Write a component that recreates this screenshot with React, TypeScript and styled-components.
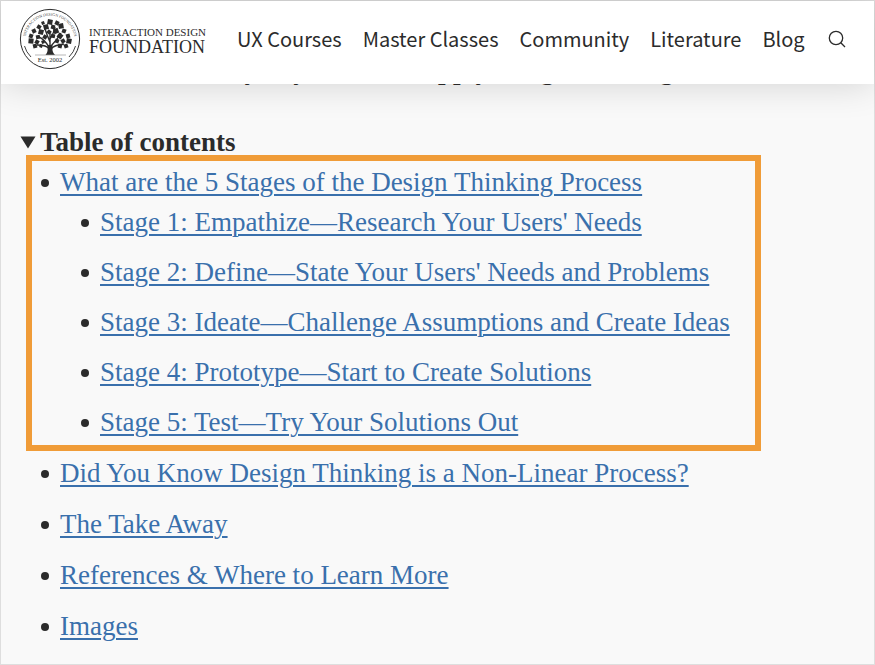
import React from "react";
import styled, { createGlobalStyle } from "styled-components";

const GlobalStyle = createGlobalStyle`
  *, *::before, *::after { box-sizing: border-box; }
  body { margin: 0; background: #f9f9f9; }
`;

const serif = `"Liberation Serif", "Times New Roman", serif`;
const ink = "#2b2b2b";

const Page = styled.div`
  min-height: 100vh;
  border: 1px solid #dedede;
  background: #f9f9f9;
  color: ${ink};
  font-family: ${serif};
  font-size: 27px;
  line-height: 40px;
`;

const Header = styled.header`
  position: sticky;
  top: 0;
  z-index: 2;
  display: flex;
  align-items: center;
  height: 83px;
  padding: 0 27px 8px 18px;
  background: #fff;
  box-shadow: 0 0 36px rgba(0, 0, 0, 0.16);
`;

const Brand = styled.a`
  display: flex;
  align-items: center;
  gap: 8px;
  color: ${ink};
  text-decoration: none;
`;

const Wordmark = styled.span`
  display: flex;
  flex-direction: column;
  padding-top: 4px;
  white-space: nowrap;
`;

const WordTop = styled.span`
  font-size: 11px;
  line-height: 12px;
`;

const WordBottom = styled.span`
  font-size: 18px;
  line-height: 18px;
`;

const Nav = styled.nav`
  display: flex;
  gap: 21px;
  margin-left: 31px;
`;

const NavLink = styled.a`
  color: ${ink};
  font-family: "Noto Sans CJK SC", "Noto Sans", sans-serif;
  font-size: 20px;
  line-height: 32px;
  text-decoration: none;
  white-space: nowrap;
`;

const SearchButton = styled.button`
  display: flex;
  margin-left: 22px;
  padding: 0;
  border: 0;
  background: none;
  color: ${ink};
  cursor: pointer;
`;

const Article = styled.main`
  padding: 0 20px 16px 19px;
`;

const Intro = styled.p`
  margin: -34px 0 32px;
  padding-left: 190px;
  font-weight: 700;
  white-space: nowrap;
`;

const Summary = styled.summary`
  display: flex;
  align-items: center;
  gap: 4px;
  font-weight: 700;
  cursor: pointer;
  list-style: none;
  &::-webkit-details-marker { display: none; }
`;

const List = styled.ul<{ $gap: number }>`
  display: flex;
  flex-direction: column;
  gap: ${(p) => p.$gap}px;
  margin: 0;
  padding-left: 40px;
  list-style: none;
`;

const Item = styled.li`
  position: relative;
  width: fit-content;
  &::before {
    content: "";
    position: absolute;
    left: -19px;
    top: 17px;
    width: 8px;
    height: 8px;
    border-radius: 50%;
    background: ${ink};
  }
`;

const Highlight = styled.span`
  position: absolute;
  inset: -7px -31px -9px -34px;
  border: 6px solid #f09c38;
  pointer-events: none;
`;

const TextLink = styled.a`
  color: #3a70ac;
  text-decoration: underline;
  text-decoration-thickness: 2px;
  text-underline-offset: 3px;
`;

const leaves: [number, number, number, number][] = [
  [30, 13, 5, 10], [23, 14, 3, -20], [37, 14, 4, 25], [19, 18, 4, 30],
  [26, 18, 5, -15], [33, 18, 4, 15], [41, 17, 5, -10], [14, 22, 4, -25],
  [21, 23, 5, 15], [29, 23, 4, 40], [36, 22, 5, -20], [44, 22, 4, 20],
  [11, 27, 4, 20], [18, 28, 4, -10], [25, 28, 4, 30], [33, 27, 4, 10],
  [40, 27, 5, 35], [48, 27, 4, -15], [11, 32, 5, 5], [17, 33, 4, 30],
  [23, 33, 3, -20], [37, 32, 4, 20], [43, 32, 4, -30], [49, 32, 5, 10],
  [15, 37, 4, -15], [21, 37, 3, 20], [40, 37, 4, 15], [46, 37, 4, -20],
];

function Seal() {
  return (
    <svg width="62" height="62" viewBox="-1 -1 62 62" aria-hidden="true">
      <circle cx="30" cy="30" r="29.6" fill="#fff" stroke={ink} strokeWidth="1" />
      <path id="seal-arc" d="M5.8 35 A24.5 24.5 0 1 1 54.2 35" fill="none" />
      <text fontFamily="Liberation Serif, serif" fontSize="4" fill="#444">
        <textPath href="#seal-arc" startOffset="50%" textAnchor="middle">
          INTERACTION DESIGN FOUNDATION
        </textPath>
      </text>
      <path d="M4.5 37 Q6 43 11 48 M55.5 37 Q54 43 49 48" fill="none" stroke={ink} strokeWidth="0.9" />
      <g fill={ink}>
        {leaves.map(([x, y, s, r]) => (
          <rect
            key={`${x}-${y}`}
            x={x - s / 2}
            y={y - s / 2}
            width={s}
            height={s}
            transform={`rotate(${r} ${x} ${y})`}
          />
        ))}
        <path d="M25.500 46 Q28.500 43 27.500 36 L32.500 36 Q31.500 43 35 46 Z" />
      </g>
      <path
        d="M30 42 V22 M29 40 Q27 36 17 36 M29 38 Q24 30 19 28 M31 40 Q34 36 44 35 M31 37 Q37 31 41 24 M30 33 Q27 26 25 20 M30 30 Q34 24 35 18"
        fill="none"
        stroke={ink}
        strokeWidth="1.4"
      />
      <path d="M15 46 H46" stroke="#999" strokeWidth="0.7" />
      <text x="30" y="53" textAnchor="middle" fontFamily="Liberation Serif, serif" fontSize="6.5" fill={ink}>
        Est. 2002
      </text>
    </svg>
  );
}

const navLinks = ["UX Courses", "Master Classes", "Community", "Literature", "Blog"];

const stages = [
  "Stage 1: Empathize—Research Your Users' Needs",
  "Stage 2: Define—State Your Users' Needs and Problems",
  "Stage 3: Ideate—Challenge Assumptions and Create Ideas",
  "Stage 4: Prototype—Start to Create Solutions",
  "Stage 5: Test—Try Your Solutions Out",
];

const sections = [
  "Did You Know Design Thinking is a Non-Linear Process?",
  "The Take Away",
  "References & Where to Learn More",
  "Images",
];

export default function App() {
  return (
    <Page>
      <GlobalStyle />
      <Header>
        <Brand href="#home">
          <Seal />
          <Wordmark>
            <WordTop>INTERACTION DESIGN</WordTop>
            <WordBottom>FOUNDATION</WordBottom>
          </Wordmark>
        </Brand>
        <Nav>
          {navLinks.map((label) => (
            <NavLink key={label} href="#nav">{label}</NavLink>
          ))}
        </Nav>
        <SearchButton aria-label="Search">
          <svg width="20" height="20" viewBox="0 0 20 20" fill="none" stroke="currentColor" strokeWidth="1.3">
            <circle cx="9" cy="9" r="6.700" />
            <path d="M13.800 13.800 L18 18" />
          </svg>
        </SearchButton>
      </Header>
      <Article>
        <Intro>why any team can apply design thinking</Intro>
        <details open>
          <Summary>
            <svg width="16" height="13" viewBox="0 0 16 13" aria-hidden="true">
              <path d="M0.500 0.500 H15.500 L8 12.500 Z" fill={ink} />
            </svg>
            Table of contents
          </Summary>
          <List $gap={11}>
            <Item>
              <TextLink href="#stages">What are the 5 Stages of the Design Thinking Process</TextLink>
              <List $gap={10}>
                {stages.map((label) => (
                  <Item key={label}>
                    <TextLink href="#stage">{label}</TextLink>
                  </Item>
                ))}
              </List>
              <Highlight />
            </Item>
            {sections.map((label) => (
              <Item key={label}>
                <TextLink href="#section">{label}</TextLink>
              </Item>
            ))}
          </List>
        </details>
      </Article>
    </Page>
  );
}
